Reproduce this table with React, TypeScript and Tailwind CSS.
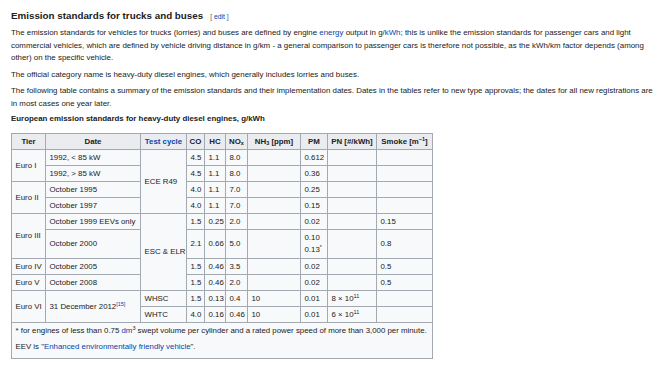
import React from 'react'

const A: React.FC<{ children: React.ReactNode }> = ( { children } ) => (
  <a href="#" className="text-[#0645ad]">{children}</a>
)

const Th: React.FC<{ children: React.ReactNode }> = ( { children } ) => (
  <th className="whitespace-nowrap border border-[#a2a9b1] bg-[#eaecf0] px-[2px] py-0 text-center font-bold leading-[15px]">
    {children}
  </th>
)

const Td: React.FC<{ children?: React.ReactNode, rowSpan?: number }> = ( { children, rowSpan } ) => (
  <td rowSpan={rowSpan}
    className="whitespace-nowrap border border-[#a2a9b1] px-[3.5px] py-0 align-middle leading-[15px]"
  >
    {children}
  </td>
)

export default function App() {
  return (
    <div className="min-h-[365px] bg-white px-[11px] pt-[9px] text-[7.9px] leading-[12.6px] text-[#202122] [font-family:'Liberation_Sans',Arial,sans-serif]">
      <h3 className="flex items-baseline text-[9.8px] font-bold leading-[13px]">
        Emission standards for trucks and buses
        <span className="ml-[7px] text-[6.8px] font-normal text-[#54595d]">
          [ <A>edit</A> ]
        </span>
      </h3>

      <p className="mt-[4px]">
        The emission standards for vehicles for trucks (lorries) and buses are defined by engine <A>energy</A> output in g/<A>kWh</A>; this is unlike the emission standards for passenger cars and light commercial vehicles, which are defined by vehicle driving distance in g/km - a general comparison to passenger cars is therefore not possible, as the kWh/km factor depends (among other) on the specific vehicle.
      </p>
      <p className="mt-[4px]">
        The official category name is heavy-duty diesel engines, which generally includes lorries and buses.
      </p>
      <p className="mt-[4px]">
        The following table contains a summary of the emission standards and their implementation dates. Dates in the tables refer to new type approvals; the dates for all new registrations are in most cases one year later.
      </p>

      <div className="mt-[2.5px] font-bold">European emission standards for heavy-duty diesel engines, g/kWh</div>

      <table className="mt-[7px] w-[421px] table-fixed border-collapse border border-[#a2a9b1] bg-[#f8f9fa] text-[7.85px]">
        <colgroup>
          <col className="w-[34px]" />
          <col className="w-[95px]" />
          <col className="w-[46px]" />
          <col className="w-[18px]" />
          <col className="w-[21px]" />
          <col className="w-[22px]" />
          <col className="w-[53px]" />
          <col className="w-[27px]" />
          <col className="w-[49px]" />
          <col className="w-[56px]" />
        </colgroup>
        <thead>
          <tr>
            <Th>Tier</Th>
            <Th>Date</Th>
            <Th><A>Test cycle</A></Th>
            <Th>CO</Th>
            <Th>HC</Th>
            <Th>NO<sub className="text-[5.5px]">x</sub></Th>
            <Th>NH<sub className="text-[5.5px]">3</sub> [ppm]</Th>
            <Th>PM</Th>
            <Th>PN [#/kWh]</Th>
            <Th>Smoke [m<sup className="text-[5.5px]">−1</sup>]</Th>
          </tr>
        </thead>
        <tbody>
          <tr>
            <Td rowSpan={2}>Euro I</Td>
            <Td>1992, &lt; 85 kW</Td>
            <Td rowSpan={4}>ECE R49</Td>
            <Td>4.5</Td>
            <Td>1.1</Td>
            <Td>8.0</Td>
            <Td />
            <Td>0.612</Td>
            <Td />
            <Td />
          </tr>
          <tr>
            <Td>1992, &gt; 85 kW</Td>
            <Td>4.5</Td>
            <Td>1.1</Td>
            <Td>8.0</Td>
            <Td />
            <Td>0.36</Td>
            <Td />
            <Td />
          </tr>
          <tr>
            <Td rowSpan={2}>Euro II</Td>
            <Td>October 1995</Td>
            <Td>4.0</Td>
            <Td>1.1</Td>
            <Td>7.0</Td>
            <Td />
            <Td>0.25</Td>
            <Td />
            <Td />
          </tr>
          <tr>
            <Td>October 1997</Td>
            <Td>4.0</Td>
            <Td>1.1</Td>
            <Td>7.0</Td>
            <Td />
            <Td>0.15</Td>
            <Td />
            <Td />
          </tr>
          <tr>
            <Td rowSpan={2}>Euro III</Td>
            <Td>October 1999 EEVs only</Td>
            <Td rowSpan={4}>ESC &amp; ELR</Td>
            <Td>1.5</Td>
            <Td>0.25</Td>
            <Td>2.0</Td>
            <Td />
            <Td>0.02</Td>
            <Td />
            <Td>0.15</Td>
          </tr>
          <tr>
            <Td>October 2000</Td>
            <Td>2.1</Td>
            <Td>0.66</Td>
            <Td>5.0</Td>
            <Td />
            <td className="border border-[#a2a9b1] px-[3.5px] py-[2px] align-middle leading-[12px]">
              0.10<br />0.13<sup className="text-[5px]">*</sup>
            </td>
            <Td />
            <Td>0.8</Td>
          </tr>
          <tr>
            <Td>Euro IV</Td>
            <Td>October 2005</Td>
            <Td>1.5</Td>
            <Td>0.46</Td>
            <Td>3.5</Td>
            <Td />
            <Td>0.02</Td>
            <Td />
            <Td>0.5</Td>
          </tr>
          <tr>
            <Td>Euro V</Td>
            <Td>October 2008</Td>
            <Td>1.5</Td>
            <Td>0.46</Td>
            <Td>2.0</Td>
            <Td />
            <Td>0.02</Td>
            <Td />
            <Td>0.5</Td>
          </tr>
          <tr>
            <Td rowSpan={2}>Euro VI</Td>
            <Td rowSpan={2}>31 December 2012<sup className="text-[5.5px] text-[#0645ad]">[15]</sup></Td>
            <Td>WHSC</Td>
            <Td>1.5</Td>
            <Td>0.13</Td>
            <Td>0.4</Td>
            <Td>10</Td>
            <Td>0.01</Td>
            <Td>8 × 10<sup className="text-[5.5px]">11</sup></Td>
            <Td />
          </tr>
          <tr>
            <Td>WHTC</Td>
            <Td>4.0</Td>
            <Td>0.16</Td>
            <Td>0.46</Td>
            <Td>10</Td>
            <Td>0.01</Td>
            <Td>6 × 10<sup className="text-[5.5px]">11</sup></Td>
            <Td />
          </tr>
          <tr>
            <td colSpan={10} className="whitespace-nowrap border border-[#a2a9b1] px-[3.5px] pt-[2px] pb-[4px] leading-[12.6px]">
              <p>* for engines of less than 0.75 <A>dm</A><sup className="text-[5.5px]">3</sup> swept volume per cylinder and a rated power speed of more than 3,000 per minute.</p>
              <p className="mt-[4px]">EEV is "<A>Enhanced environmentally friendly vehicle</A>".</p>
            </td>
          </tr>
        </tbody>
      </table>
    </div>
  )
}
